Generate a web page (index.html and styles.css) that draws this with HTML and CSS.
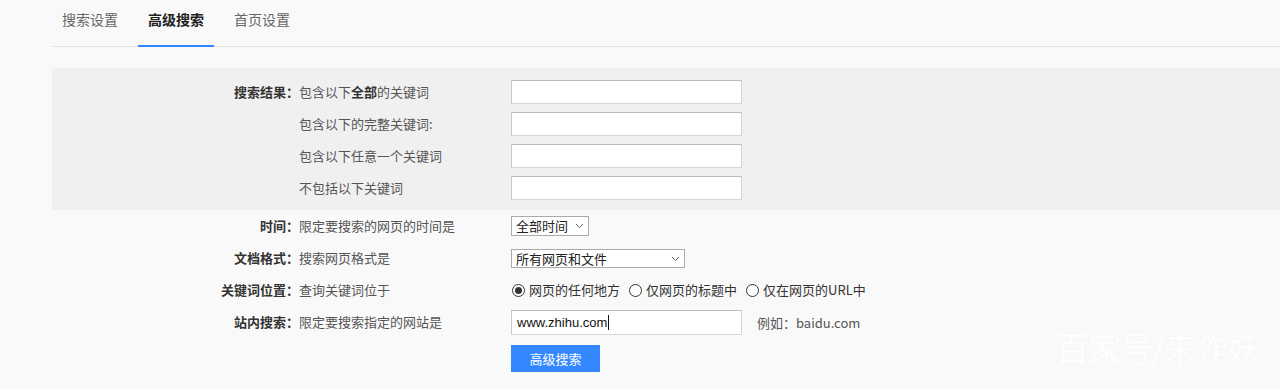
FILE: index.html
```html
<!DOCTYPE html>
<html lang="zh-CN">
<head>
    <meta charset="UTF-8">
    <title>高级搜索</title>
    <link rel="stylesheet" href="styles.css">
</head>
<body>

    <!-- Tabs -->
    <div class="tabs">
        <a class="tab" href="#">搜索设置</a>
        <a class="tab active" href="#">高级搜索</a>
        <a class="tab" href="#">首页设置</a>
    </div>

    <form class="adv-form">
        <!-- Keyword block -->
        <div class="group">
            <div class="row">
                <label class="label">搜索结果：</label>
                <span class="desc">包含以下<b>全部</b>的关键词</span>
                <input class="text-input" type="text">
            </div>
            <div class="row">
                <label class="label"></label>
                <span class="desc">包含以下的完整关键词:</span>
                <input class="text-input" type="text">
            </div>
            <div class="row">
                <label class="label"></label>
                <span class="desc">包含以下任意一个关键词</span>
                <input class="text-input" type="text">
            </div>
            <div class="row">
                <label class="label"></label>
                <span class="desc">不包括以下关键词</span>
                <input class="text-input" type="text">
            </div>
        </div>

        <div class="row row-plain">
            <label class="label">时间：</label>
            <span class="desc">限定要搜索的网页的时间是</span>
            <span class="select-wrap select-time">
                <select>
                    <option>全部时间</option>
                </select>
                <svg class="chevron" width="9" height="6" viewBox="0 0 9 6"><path d="M1 1l3.5 3.5L8 1" fill="none" stroke="#666" stroke-width="1"/></svg>
            </span>
        </div>

        <div class="row row-plain">
            <label class="label">文档格式：</label>
            <span class="desc">搜索网页格式是</span>
            <span class="select-wrap select-type">
                <select>
                    <option>所有网页和文件</option>
                </select>
                <svg class="chevron" width="9" height="6" viewBox="0 0 9 6"><path d="M1 1l3.5 3.5L8 1" fill="none" stroke="#666" stroke-width="1"/></svg>
            </span>
        </div>

        <div class="row row-plain">
            <label class="label">关键词位置：</label>
            <span class="desc">查询关键词位于</span>
            <span class="radios">
                <label class="radio"><input type="radio" name="pos" checked>网页的任何地方</label>
                <label class="radio"><input type="radio" name="pos">仅网页的标题中</label>
                <label class="radio"><input type="radio" name="pos">仅在网页的URL中</label>
            </span>
        </div>

        <div class="row row-plain">
            <label class="label">站内搜索：</label>
            <span class="desc">限定要搜索指定的网站是</span>
            <span class="site">
                <span class="text-input site-input">www.zhihu.com<i class="caret"></i></span>
                <span class="hint">例如：baidu.com</span>
            </span>
        </div>

        <div class="row row-btn">
            <span class="label"></span>
            <span class="desc"></span>
            <button type="button" class="submit">高级搜索</button>
        </div>
    </form>

    <div class="watermark">百家号/来作妖</div>

</body>
</html>
```

FILE: styles.css
```css
* {
    margin: 0;
    padding: 0;
    box-sizing: border-box;
}

body {
    font-family: "Noto Sans CJK SC", "Liberation Sans", sans-serif;
    font-size: 13px;
    color: #333;
    background-color: #f9f9f9;
    height: 389px;
    overflow: hidden;
    position: relative;
}

/* Tabs */
.tabs {
    display: flex;
    margin-left: 52px;
    border-bottom: 1px solid #e4e4e4;
    height: 47px;
}

.tab {
    display: block;
    padding: 9px 10px 16px;
    margin-right: 10px;
    font-size: 14px;
    line-height: 20px;
    color: #666;
    text-decoration: none;
}

.tab.active {
    color: #222;
    font-weight: bold;
    border-bottom: 2px solid #3385ff;
    height: 47px;
    margin-bottom: -1px;
}

/* Form */
.adv-form {
    margin-top: 21px;
    margin-left: 52px;
}

.group {
    background-color: #f0f0f0;
    padding: 12px 0 10px;
    display: flex;
    flex-direction: column;
    gap: 8px;
}

.row {
    display: grid;
    grid-template-columns: 247px 212px 1fr;
    align-items: center;
    justify-items: start;
    height: 24px;
    line-height: 20px;
}

.row .label {
    justify-self: stretch;
}

.row-plain {
    height: 32px;
}

.row-plain:first-of-type {
    margin-top: 1px;
}

.label {
    text-align: right;
    font-weight: bold;
    color: #333;
}

.desc {
    color: #555;
}

.desc b {
    color: #333;
}

.text-input {
    width: 231px;
    height: 24px;
    border: 1px solid #d6d6d6;
    border-top-color: #bdbdbd;
    border-left-color: #c9c9c9;
    background: #fff;
    font-family: inherit;
    font-size: 13px;
    outline: none;
}

/* Selects */
.select-wrap {
    position: relative;
    display: inline-block;
}

.select-wrap select {
    appearance: none;
    -webkit-appearance: none;
    display: block;
    height: 20px;
    border: 1px solid #a9a9a9;
    background: #fff;
    font-family: inherit;
    font-size: 13px;
    line-height: 18px;
    color: #222;
    padding: 0 0 0 4px;
    outline: none;
}

.select-time select {
    width: 78px;
}

.select-type select {
    width: 174px;
    height: 19px;
}

.chevron {
    position: absolute;
    right: 5px;
    top: 7px;
}

/* Radios */
.radios {
    display: flex;
    gap: 8px;
    color: #333;
}

.radio {
    display: flex;
    align-items: center;
}

.radio input {
    appearance: none;
    -webkit-appearance: none;
    width: 13px;
    height: 13px;
    border: 1px solid #333;
    border-radius: 50%;
    background: #fff;
    margin: 0 4px 0 1px;
    position: relative;
}

.radio input:checked::after {
    content: "";
    position: absolute;
    left: 2px;
    top: 2px;
    width: 7px;
    height: 7px;
    border-radius: 50%;
    background: #333;
}

/* Site search */
.site {
    display: flex;
    align-items: center;
    gap: 15px;
    margin-top: 1px;
}

.site-input {
    display: flex;
    align-items: center;
    height: 25px;
    padding-left: 5px;
    color: #111;
    font-family: "Liberation Sans", sans-serif;
}

.caret {
    display: inline-block;
    width: 1px;
    height: 15px;
    background: #111;
    margin-left: 1px;
}

.hint {
    color: #555;
}

.row-btn {
    height: 27px;
    margin-top: 7px;
}

.submit {
    width: 89px;
    height: 27px;
    background-color: #3388ff;
    color: #fff;
    border: none;
    font-family: inherit;
    font-size: 13px;
    cursor: pointer;
}

.watermark {
    position: absolute;
    right: 20px;
    top: 325px;
    font-size: 33px;
    line-height: 44px;
    font-weight: 300;
    color: #ffffff;
    letter-spacing: -1px;
}
```
